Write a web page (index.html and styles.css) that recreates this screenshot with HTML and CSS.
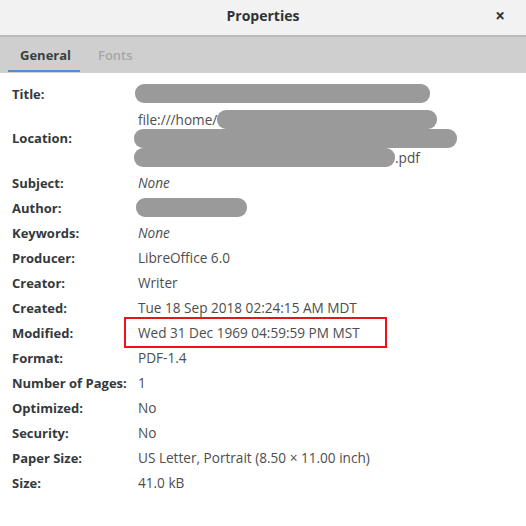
FILE: index.html
```html
<!DOCTYPE html>
<html>
<head>
<meta charset="utf-8">
<link rel="stylesheet" href="styles.css">
</head>
<body>
<div class="window">
  <div class="titlebar">
    <span class="title">Properties</span>
    <span class="close">×</span>
  </div>
  <div class="tabs">
    <span class="tab active">General</span>
    <span class="tab">Fonts</span>
  </div>
  <div class="content">
    <div class="row"><span class="label">Title:</span><span class="value"><span class="redact r-title"></span></span></div>
    <div class="row loc"><span class="label">Location:</span>
      <span class="value lines">
        <span class="line">file:///home/<span class="redact r-l1"></span></span>
        <span class="line"><span class="redact r-l2"></span></span>
        <span class="line"><span class="redact r-l3"></span>.pdf</span>
      </span>
    </div>
    <div class="row"><span class="label">Subject:</span><span class="value it">None</span></div>
    <div class="row"><span class="label">Author:</span><span class="value"><span class="redact r-author"></span></span></div>
    <div class="row"><span class="label">Keywords:</span><span class="value it">None</span></div>
    <div class="row"><span class="label">Producer:</span><span class="value">LibreOffice 6.0</span></div>
    <div class="row"><span class="label">Creator:</span><span class="value">Writer</span></div>
    <div class="row"><span class="label">Created:</span><span class="value">Tue 18 Sep 2018 02:24:15 AM MDT</span></div>
    <div class="row"><span class="label">Modified:</span><span class="value"><span class="marked">Wed 31 Dec 1969 04:59:59 PM MST</span></span></div>
    <div class="row"><span class="label">Format:</span><span class="value">PDF-1.4</span></div>
    <div class="row"><span class="label">Number of Pages:</span><span class="value">1</span></div>
    <div class="row"><span class="label">Optimized:</span><span class="value">No</span></div>
    <div class="row"><span class="label">Security:</span><span class="value">No</span></div>
    <div class="row"><span class="label">Paper Size:</span><span class="value">US Letter, Portrait (8.50 × 11.00 inch)</span></div>
    <div class="row"><span class="label">Size:</span><span class="value">41.0 kB</span></div>
  </div>
</div>
</body>
</html>
```
FILE: styles.css
```css
html, body {
  margin: 0;
  padding: 0;
  background: #ffffff;
}
.window {
  width: 526px;
  height: 526px;
  font-family: "Open Sans", "Noto Sans", sans-serif;
  font-size: 13px;
  overflow: hidden;
  background: #ffffff;
}
.titlebar {
  height: 35px;
  background: #f2f2f2;
  border-bottom: 2px solid #bcbcbc;
  display: flex;
  align-items: center;
  justify-content: center;
  position: relative;
}
.title {
  font-weight: bold;
  font-size: 14px;
  color: #2e3436;
  margin-top: -4px;
}
.close {
  position: absolute;
  right: 21px;
  top: 4px;
  font-size: 17px;
  font-weight: bold;
  color: #2e3436;
}
.tabs {
  height: 36px;
  background: #cfcfcf;
  display: flex;
  padding-left: 8px;
  box-sizing: border-box;
}
.tab {
  padding: 0 12px;
  line-height: 36px;
  color: #a6a6a6;
  font-weight: 600;
  margin-right: 6px;
}
.tab.active {
  color: #3a3f42;
  font-weight: bold;
  border-bottom: 2px solid #4a90d9;
  line-height: 36px;
  height: 33px;
  width: 48px;
}
.content {
  padding: 8px 0 0 12px;
}
.row {
  display: grid;
  grid-template-columns: 126px 1fr;
  align-items: center;
  height: 25px;
}
.row.loc {
  height: 64px;
}
.label {
  font-weight: bold;
  color: #34393b;
}
.value {
  color: #4d4d4d;
  display: flex;
  align-items: center;
  font-size: 13.6px;
}
.value.it {
  font-style: italic;
}
.lines {
  flex-direction: column;
  align-items: flex-start;
}
.line {
  height: 19px;
  display: flex;
  align-items: center;
}
.redact {
  display: inline-block;
  height: 19px;
  background: #9a9a9a;
  border-radius: 9px;
  filter: blur(0.6px);
}
.r-title { width: 295px; margin-left: -3px; }
.r-l1 { width: 220px; }
.r-l2 { width: 323px; margin-left: -4px; }
.r-l3 { width: 261px; margin-left: -4px; }
.r-author { width: 111px; margin-left: -2px; }
.marked {
  position: relative;
}
.marked::after {
  content: "";
  position: absolute;
  left: -14px;
  right: -27px;
  top: -6px;
  bottom: -6px;
  border: 2px solid #e8141c;
}
```
